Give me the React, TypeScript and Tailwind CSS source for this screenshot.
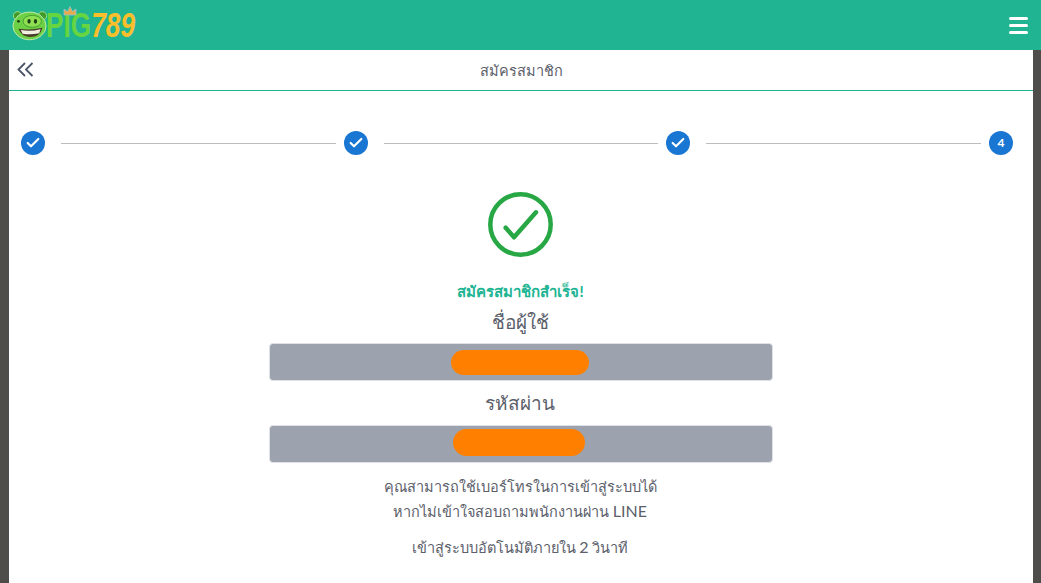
import { Check } from "lucide-react";

const font = { fontFamily: '"Lato", "Noto Sans", sans-serif' };

function PigLogo() {
  return (
    <div className="flex items-center h-[40px]">
      <svg width="35" height="32" viewBox="0 0 38 34" className="shrink-0">
        <circle cx="6" cy="7" r="4.500" fill="#3f9a2a" stroke="#a8e08a" strokeWidth="1" />
        <circle cx="33" cy="7" r="4.500" fill="#3f9a2a" stroke="#a8e08a" strokeWidth="1" />
        <ellipse cx="19" cy="18" rx="18" ry="15" fill="#6ed045" stroke="#c4ecb0" strokeWidth="1" />
        <ellipse cx="22" cy="13" rx="10" ry="6.500" fill="#8fdf52" stroke="#3f9a2a" strokeWidth="1" />
        <ellipse cx="18.500" cy="13" rx="1.700" ry="2.600" fill="#1c3d14" />
        <ellipse cx="25.500" cy="13" rx="1.700" ry="2.600" fill="#1c3d14" />
        <circle cx="7" cy="13" r="1.500" fill="#1c3d14" />
        <path d="M7 21 Q20 23 33 20 Q31 30 19 30 Q10 29 7 21Z" fill="#4a3a28" />
        <path d="M9.500 22.500 Q20 24.500 31 21.500 L29.500 26 Q20 28 11.500 26.500Z" fill="#f2f0e0" />
      </svg>
      <div className="relative w-[90px] h-[32px] ml-[-1px]">
        <div
          className="absolute left-0 top-[-2px] whitespace-nowrap origin-left scale-x-[0.75] text-[35px] leading-[36px] font-bold"
          style={{ fontFamily: '"Liberation Sans", sans-serif' }}
        >
          <span className="text-[#66d53f]">PIG</span>
          <span className="text-[#fbbf2c] italic">789</span>
        </div>
        <svg width="14" height="10" viewBox="0 0 14 10" className="absolute left-[17px] top-[-3px]">
          <path d="M1 9 L1 3 L4.500 5.500 L7 0.500 L9.500 5.500 L13 3 L13 9Z" fill="#e8a94a" stroke="#8fc4dc" strokeWidth="0.8" />
        </svg>
      </div>
    </div>
  );
}

function StepDone() {
  return (
    <div className="w-[24px] h-[24px] rounded-full bg-[#1976d2] flex items-center justify-center shrink-0">
      <Check size={16} color="#ffffff" strokeWidth={3.2} />
    </div>
  );
}

function StepLine() {
  return <div className="flex-1 h-[1px] bg-[#bdbdbd] ml-[16px] mr-[8px]" />;
}

function MaskedRow({ pill }: { pill: string }) {
  return (
    <div className="w-[504px] h-[38px] bg-[#9ca2ae] border border-[#dee2e6] rounded-[4px] flex items-center justify-center">
      <div className={`bg-[#ff8000] rounded-full ${pill}`} />
    </div>
  );
}

export default function App() {
  return (
    <div className="w-[1041px] h-[583px] overflow-hidden bg-[#4f4d49] text-[#5b606a]" style={font}>
      <header className="h-[50px] bg-[#20b493] flex items-center justify-between pl-[12px] pr-[13px]">
        <PigLogo />
        <div className="flex flex-col gap-[4px] w-[19px]">
          <div className="h-[3px] bg-white rounded-full" />
          <div className="h-[3px] bg-white rounded-full" />
          <div className="h-[3px] bg-white rounded-full" />
        </div>
      </header>

      <main className="ml-[9px] w-[1024px] h-[533px] bg-white">
        <div className="relative h-[41px] pt-[2px] border-b border-[#20b493] flex items-center justify-center text-[14.500px]">
          <svg width="17" height="15" viewBox="0 0 17 15" fill="none" stroke="#4a5568" strokeWidth="1.800" className="absolute left-[8px] top-[12px]">
            <path d="M8 1 L1.500 7.500 L8 14" />
            <path d="M15.500 1 L9 7.500 L15.500 14" />
          </svg>
          <span>สมัครสมาชิก</span>
        </div>

        <div className="flex items-center pl-[12px] pr-[20px] mt-[40px]">
          <StepDone />
          <StepLine />
          <StepDone />
          <StepLine />
          <StepDone />
          <StepLine />
          <div className="w-[24px] h-[24px] rounded-full bg-[#1976d2] flex items-center justify-center shrink-0 text-white text-[12px] font-bold">
            4
          </div>
        </div>

        <div className="flex flex-col items-center mt-[37px]">
          <svg width="65" height="65" viewBox="0 0 65 65" fill="none" stroke="#28a745" strokeWidth="4.500" strokeLinecap="round" strokeLinejoin="round" className="mr-[2px]">
            <circle cx="32.500" cy="32.500" r="30.200" />
            <path d="M17.700 35.700 L26 45.300 L48 20.300" />
          </svg>
          <div className="mt-[22px] h-[24px] leading-[24px] text-[15px] font-bold text-[#20b493] mr-[1px]">สมัครสมาชิกสำเร็จ!</div>
          <div className="mt-[3px] h-[32px] leading-[32px] text-[19px] mb-[5px] mr-[2px]">ชื่อผู้ใช้</div>
          <MaskedRow pill="w-[138px] h-[25px] mr-[2px]" />
          <div className="h-[44px] leading-[44px] text-[19px] mr-[2px]">รหัสผ่าน</div>
          <MaskedRow pill="w-[132px] h-[27px] mr-[4px] mb-[3px]" />
          <div className="mt-[12px] mr-[2px] text-[14.500px] leading-[24px] text-center">
            <p className="h-[24px]">คุณสามารถใช้เบอร์โทรในการเข้าสู่ระบบได้</p>
            <p className="h-[24px] mt-[1px]">หากไม่เข้าใจสอบถามพนักงานผ่าน <span className="text-[16px] leading-none">LINE</span></p>
            <p className="h-[24px] mt-[12px]">เข้าสู่ระบบอัตโนมัติภายใน <span className="text-[16px] leading-none">2</span> วินาที</p>
          </div>
        </div>
      </main>
    </div>
  );
}
